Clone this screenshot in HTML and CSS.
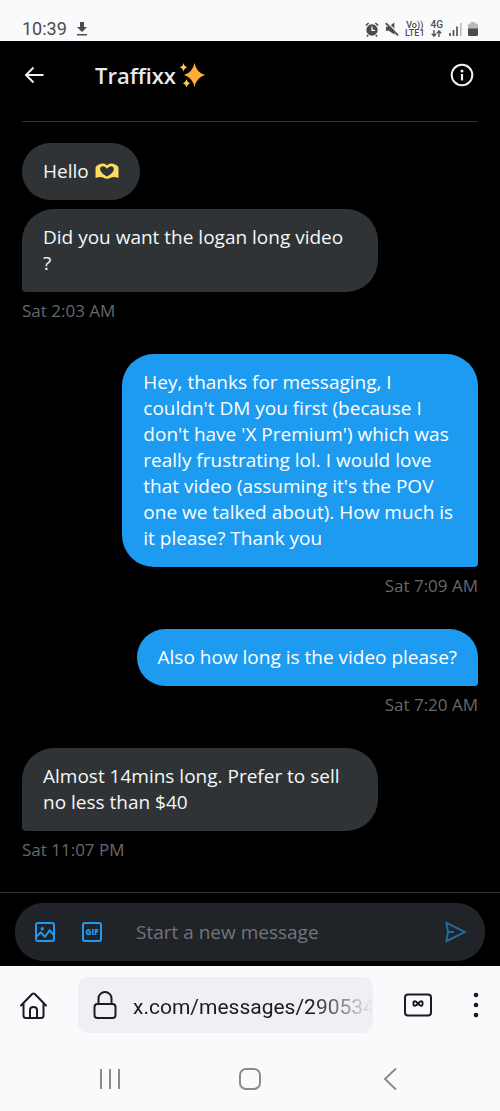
FILE: index.html
```html
<!DOCTYPE html>
<html lang="en">
<head>
<meta charset="utf-8">
<meta name="viewport" content="width=device-width, initial-scale=1">
<title>Traffixx</title>
<link rel="stylesheet" href="styles.css">
</head>
<body>
<div class="status">
  <span class="clock">10:39</span>
  <svg width="12" height="14" viewBox="0 0 12 14" fill="#4c4c4e"><path d="M4 0h4v5h3L6 10 1 5h3zM1 12h10v1.6H1z"/></svg>
  <div class="status-right">
    <svg width="14" height="15" viewBox="0 0 14 15"><path d="M1 3.500 3.600 1M13 3.500 10.400 1M3 13l-1 1.500M11 13l1 1.500" stroke="#4c4c4e" stroke-width="1.600"/><circle cx="7" cy="8" r="5.700" fill="#4c4c4e"/><path d="M7 4.500V8.300h3" fill="none" stroke="#fafafc" stroke-width="1.300"/></svg>
    <svg width="14" height="14" viewBox="0 0 15 15"><path d="M1 5h3l6-4.500v13L4 9.500H1z" fill="#4c4c4e"/><path d="M2 0 15 13" stroke="#fafafc" stroke-width="1.500"/><path d="M.8 1.200 14 14.300" stroke="#4c4c4e" stroke-width="2"/></svg>
    <span class="net">Vo))<br>LTE1</span>
    <span class="net data">4G<svg width="11" height="7" viewBox="0 0 11 7" fill="none" stroke="#4c4c4e" stroke-width="1.300"><path d="M3 0v6M.8 3.800 3 6l2.200-2.200M8 7V1M5.800 3.200 8 1l2.200 2.200"/></svg></span>
    <svg width="13" height="13" viewBox="0 0 13 13"><path d="M1 10v3M4.500 7v6M8 3.500V13" stroke="#4c4c4e" stroke-width="1.600"/><path d="M11.800 0v13" stroke="#b9b9bb" stroke-width="1.600"/></svg>
    <svg width="10" height="14" viewBox="0 0 10 14"><path d="M3 0h4v1.500h1.500Q10 1.500 10 3v4H0V3q0-1.500 1.500-1.500H3z" fill="#b9b9bb"/><path d="M0 6.500h10v6q0 1.500-1.500 1.500h-7Q0 14 0 12.500z" fill="#4c4c4e"/></svg>
  </div>
</div>

<main class="app">
  <header class="header">
    <button class="icon-btn" aria-label="Back"><svg width="20" height="18" viewBox="0 0 20 18" fill="none" stroke="#eff3f4" stroke-width="2"><path d="M9.500 1.500 2 9l7.500 7.500M2 9h17.500"/></svg></button>
    <h1 class="title">Traffixx<svg role="img" aria-label="sparkles" width="26" height="26" viewBox="0 0 26 26"><path d="M15.500 1Q17.500 10.500 26 13 17.500 15.500 15.500 25 13.500 15.500 5 13 13.500 10.500 15.500 1z" fill="#ffac33"/><path d="M4.500 1Q5.300 4.700 8.500 5.300 5.300 6 4.500 9.500 3.700 6 .5 5.300 3.700 4.700 4.500 1zM7.500 17Q8.300 20.500 11.500 21.300 8.300 22 7.500 25.500 6.700 22 3.500 21.300 6.700 20.500 7.500 17z" fill="#ffcc4d"/></svg></h1>
    <button class="icon-btn" aria-label="Conversation info"><svg width="24" height="24" viewBox="0 0 24 24"><circle cx="12" cy="12" r="10.300" fill="none" stroke="#eff3f4" stroke-width="2"/><circle cx="12" cy="8" r="1.500" fill="#eff3f4"/><path d="M12 11v6.500" stroke="#eff3f4" stroke-width="2.200"/></svg></button>
  </header>

  <section class="thread" aria-label="Messages">
    <div class="group">
      <p class="bubble round">Hello <svg role="img" aria-label="heart hands" width="24" height="16" viewBox="0 0 24 16"><path d="M.5 15V4.500Q1 2.500 4 1.500 7-.3 9.500.8L12 2.300 14.500.8Q17-.3 20 1.500 23 2.500 23.500 4.500V15Q19 13.300 16 14.500 14 15.700 12 15.700 10 15.700 8 14.500 5 13.300.5 15zM12 13.500Q17.500 10.500 18.800 7 19.300 3.500 16.300 3.200 13.500 3 12 5.800 10.500 3 7.700 3.200 4.700 3.500 5.200 7 6.500 10.500 12 13.500z" fill="#ffdc5d" fill-rule="evenodd"/></svg></p>
      <p class="bubble wide">Did you want the logan long video<br>?</p>
      <time class="time">Sat 2:03 AM</time>
    </div>
    <div class="group mine">
      <p class="bubble">Hey, thanks for messaging, I couldn't DM you first (because I don't have 'X Premium') which was really frustrating lol. I would love that video (assuming it's the POV one we talked about). How much is it please? Thank you</p>
      <time class="time">Sat 7:09 AM</time>
    </div>
    <div class="group mine">
      <p class="bubble">Also how long is the video please?</p>
      <time class="time">Sat 7:20 AM</time>
    </div>
    <div class="group">
      <p class="bubble">Almost 14mins long. Prefer to sell no less than $40</p>
      <time class="time">Sat 11:07 PM</time>
    </div>
  </section>

  <form class="composer">
    <div class="composer-box">
      <button type="button" class="icon-btn" aria-label="Add photo"><svg width="20" height="20" viewBox="0 0 20 20" fill="none" stroke="#1d9bf0" stroke-width="2"><rect x="1" y="1" width="18" height="18" rx="2"/><circle cx="7.300" cy="6.700" r="1.700" fill="#1d9bf0" stroke="none"/><path d="m1.500 14.500 4.300-4 4.200 4.300 4.600-6.500 4.400 5"/></svg></button>
      <button type="button" class="icon-btn gif" aria-label="Add GIF">GIF</button>
      <input class="message" type="text" placeholder="Start a new message" aria-label="Start a new message">
      <button type="button" class="icon-btn" aria-label="Send"><svg width="22" height="22" viewBox="0 0 22 22" fill="none" stroke="#216b9f" stroke-width="2"><path d="M1.500 1.800 20 11 1.500 20.200 3 11zM3 11h6"/></svg></button>
    </div>
  </form>
</main>

<div class="browser">
  <button class="icon-btn" aria-label="Home"><svg width="27" height="27" viewBox="0 0 27 27" fill="none" stroke="#1c1b22" stroke-width="2" stroke-linecap="round" stroke-linejoin="round"><path d="M1 13.500 12.200 2q1.300-1 2.600 0L26 13.500M3.500 11.500V23.500q0 2.500 2.500 2.500h15q2.500 0 2.500-2.500V11.500M10 26v-8q0-3 3.500-3t3.500 3v8"/></svg></button>
  <div class="url-box">
    <svg width="24" height="28" viewBox="0 0 24 28" fill="none" stroke="#1c1b22" stroke-width="2"><rect x="1.500" y="13" width="21" height="14" rx="3"/><path d="M5.500 13V7.500a6.500 6.500 0 0 1 13 0V13"/></svg>
    <input class="url" type="text" value="x.com/messages/290534" aria-label="Address">
  </div>
  <button class="icon-btn" aria-label="Tabs"><svg width="28" height="24" viewBox="0 0 28 24" fill="none" stroke="#1c1b22" stroke-width="2"><rect x="1" y="1.500" width="26" height="21" rx="3"/><path d="M14 10.500c-1.500-2-2.500-2.700-3.500-2.200-1.500.5-1.500 4 0 4.500 1 .4 2-.5 3.500-2.300s2.500-2.700 3.500-2.200c1.500.5 1.500 4 0 4.500-1 .4-2-.5-3.500-2.300z"/></svg></button>
  <button class="icon-btn" aria-label="Menu"><svg width="6" height="26" viewBox="0 0 6 26" fill="#1c1b22"><circle cx="3" cy="3" r="2.300"/><circle cx="3" cy="13" r="2.300"/><circle cx="3" cy="23" r="2.300"/></svg></button>
</div>

<nav class="sysnav" aria-label="System">
  <button class="icon-btn" aria-label="Recents"><svg width="22" height="22" viewBox="0 0 22 22" stroke="#8b8b8e" stroke-width="2"><path d="M2 1v20M11 1v20M20 1v20"/></svg></button>
  <button class="icon-btn" aria-label="Home screen"><svg width="22" height="22" viewBox="0 0 22 22" fill="none" stroke="#8b8b8e" stroke-width="2"><rect x="1" y="1" width="20" height="20" rx="6"/></svg></button>
  <button class="icon-btn" aria-label="Go back"><svg width="22" height="24" viewBox="0 0 22 24" fill="none" stroke="#8b8b8e" stroke-width="2"><path d="M17 1.500 6 12l11 10.500"/></svg></button>
</nav>
</body>
</html>
```

FILE: styles.css
```css
* { box-sizing: border-box; }
body {
  margin: 0;
  min-height: 100vh;
  display: flex;
  flex-direction: column;
  background: #fafafc;
  font-family: "Open Sans", "Noto Sans", sans-serif;
}
svg { display: block; flex: none; }
.icon-btn {
  display: grid;
  place-items: center;
  flex: none;
  padding: 0;
  border: 0;
  background: none;
}

.status {
  display: flex;
  align-items: center;
  gap: 9px;
  height: 41px;
  padding: 17px 22px 0 22px;
  color: #4c4c4e;
  font-family: Roboto, sans-serif;
}
.clock { font-size: 18px; line-height: 24px; }
.status-right { display: flex; align-items: center; gap: 6px; margin-left: auto; }
.net { font-size: 9px; line-height: 8px; font-weight: 500; text-align: center; }
.data { display: grid; justify-items: center; gap: 1px; font-size: 10px; }

.app {
  flex: 1;
  display: flex;
  flex-direction: column;
  background: #000;
}
.header {
  display: flex;
  align-items: center;
  height: 81px;
  margin: 0 22px;
  padding: 0 4px 12px 2px;
  border-bottom: 1px solid #2f3336;
}
.title {
  flex: 1;
  display: flex;
  align-items: center;
  gap: 3px;
  margin: 0 0 0 51px;
  color: #e7e9ea;
  font-size: 22px;
  line-height: 28px;
  font-weight: 600;
}

.thread {
  flex: 1;
  display: flex;
  flex-direction: column;
  justify-content: space-between;
  padding: 21px 22px 32px;
}
.group { display: flex; flex-direction: column; align-items: flex-start; gap: 9px; }
.bubble {
  max-width: 78%;
  margin: 0;
  padding: 15px 21px 16px;
  border-radius: 32px 32px 32px 4px;
  background: #2f3336;
  color: #f5f7f8;
  font-size: 19px;
  line-height: 26px;
}
.round { display: flex; align-items: center; gap: 6px; border-radius: 32px; }
.wide { width: 78%; }
.mine { align-items: flex-end; }
.mine .bubble { border-radius: 32px 32px 4px 32px; background: #1d9bf0; color: #fff; }
.time { color: #65696d; font-size: 17px; line-height: 20px; }

.composer { padding: 10px 15px 5px; border-top: 1px solid #2f3336; }
.composer-box {
  display: flex;
  align-items: center;
  height: 58px;
  padding: 0 18px 0 20px;
  border-radius: 28px;
  background: #202327;
}
.gif {
  width: 20px;
  height: 20px;
  margin: 0 34px 0 27px;
  border: 2px solid #1d9bf0;
  border-radius: 3px;
  color: #1d9bf0;
  font: 800 8px/16px "Open Sans", sans-serif;
}
.message {
  flex: 1;
  min-width: 0;
  padding: 0;
  border: 0;
  background: none;
  color: #e7e9ea;
  font: 19px/26px "Open Sans", sans-serif;
}
.message::placeholder { color: #71767b; opacity: 1; }

.browser {
  display: flex;
  align-items: center;
  height: 78px;
  padding: 0 21px 0 20px;
}
.url-box {
  flex: 1;
  min-width: 0;
  display: flex;
  align-items: center;
  gap: 16px;
  height: 56px;
  margin: 0 31px;
  padding-left: 15px;
  border-radius: 10px;
  background: #f0f0f4;
}
.url {
  flex: 1;
  min-width: 0;
  padding: 3px 0 0;
  border: 0;
  background: none;
  color: #1c1b22;
  font: 21px/28px Roboto, sans-serif;
  -webkit-mask-image: linear-gradient(to left, transparent, #000 60px);
  mask-image: linear-gradient(to left, transparent, #000 60px);
}
.browser > :last-child { margin-left: 41px; }

.sysnav {
  display: flex;
  align-items: center;
  justify-content: space-between;
  height: 67px;
  padding: 3px 99px 0;
}
```
